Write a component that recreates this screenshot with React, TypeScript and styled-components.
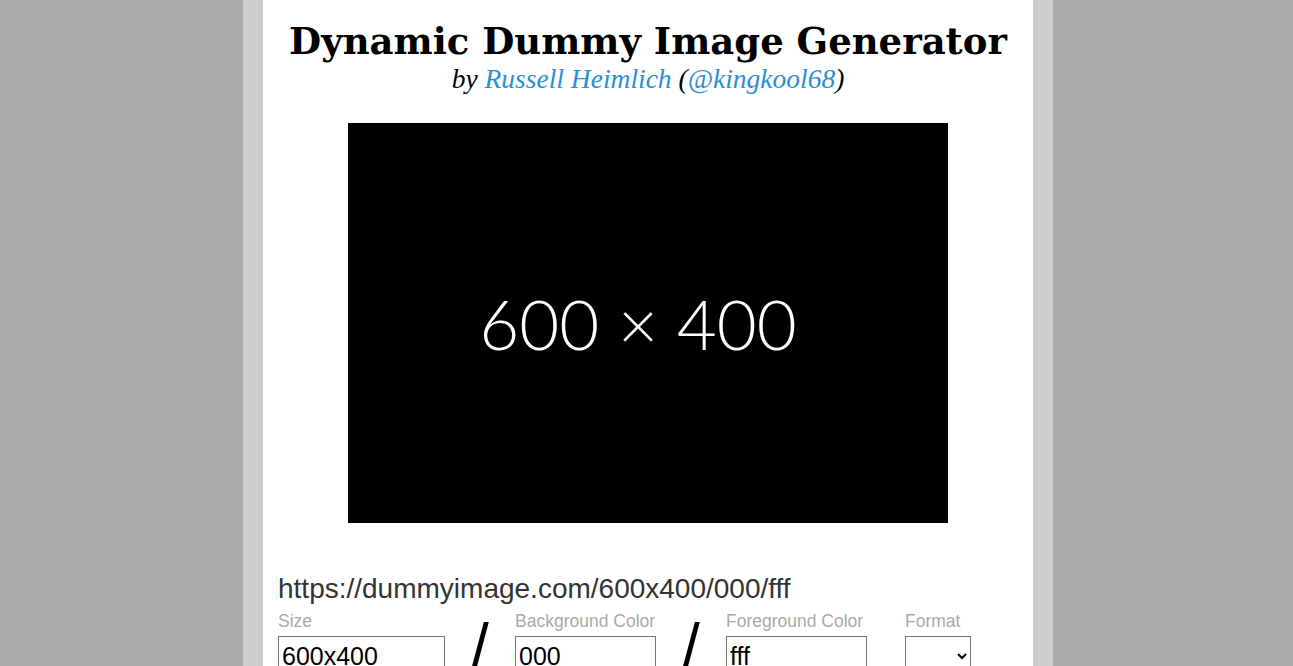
import React from "react";
import styled, { createGlobalStyle } from "styled-components";

const GlobalStyle = createGlobalStyle`
  html, body {
    margin: 0;
    padding: 0;
    background: #aaa;
    overflow: hidden;
  }
  body {
    padding-left: 3px;
    font-family: "Liberation Sans", Arial, sans-serif;
  }
`;

const Page = styled.div`
  width: 740px;
  min-height: 666px;
  margin: 0 auto;
  padding: 0 15px;
  background: #fff;
  border-left: 20px solid #ccc;
  border-right: 20px solid #ccc;
`;

const Header = styled.header`
  text-align: center;
  padding-top: 18px;
`;

const Title = styled.h1`
  margin: 0;
  font-family: "DejaVu Serif", Georgia, serif;
  font-weight: bold;
  font-size: 37px;
  line-height: 46px;
  color: #000;
`;

const Byline = styled.p`
  margin: 0;
  font-family: "Liberation Serif", Georgia, serif;
  font-style: italic;
  font-size: 27.5px;
  line-height: 30px;
  color: #000;

  a {
    color: #2b8fd3;
    text-decoration: none;
  }
`;

const Preview = styled.div<{ bg: string; fg: string }>`
  width: 600px;
  height: 400px;
  margin: 29px auto 0;
  padding-right: 20px;
  box-sizing: border-box;
  background: #${(p) => p.bg};
  color: #${(p) => p.fg};
  display: flex;
  align-items: center;
  justify-content: center;
  font-family: Lato, "Open Sans", sans-serif;
  font-weight: 300;
  font-size: 69px;
`;

const Url = styled.div`
  margin-top: 50px;
  font-size: 28px;
  line-height: 32px;
  color: #333;
`;

const Fields = styled.div`
  display: flex;
  align-items: flex-start;
  margin-top: 6px;
`;

const Field = styled.label<{ w: number }>`
  display: flex;
  flex-direction: column;
  width: ${(p) => p.w}px;
  font-size: 17.5px;
  line-height: 20px;
  color: #aaa;
`;

const TextInput = styled.input`
  margin-top: 5px;
  height: 40px;
  box-sizing: border-box;
  border: 1px solid #767676;
  padding: 0 3px;
  font-family: "Liberation Sans", Arial, sans-serif;
  font-size: 25px;
  color: #000;
  outline: none;
`;

const Select = styled.select`
  margin-top: 5px;
  height: 40px;
  box-sizing: border-box;
  border: 1px solid #767676;
  background: #fff;
  font-size: 16px;
`;

const Slash = styled.div<{ w: number }>`
  width: ${(p) => p.w}px;
  text-align: center;
  font-size: 64px;
  line-height: 64px;
  padding-top: 4px;
  color: #000;
`;

export default function App() {
  const size = "600x400";
  const bg = "000";
  const fg = "fff";
  const [w, h] = size.split("x");

  return (
    <>
      <GlobalStyle />
      <Page>
        <Header>
          <Title>Dynamic Dummy Image Generator</Title>
          <Byline>
            by <a href="#">Russell Heimlich</a> (<a href="#">@kingkool68</a>)
          </Byline>
        </Header>
        <Preview bg={bg} fg={fg}>
          {w} × {h}
        </Preview>
        <Url>https://dummyimage.com/{size}/{bg}/{fg}</Url>
        <Fields>
          <Field w={167}>
            Size
            <TextInput defaultValue={size} />
          </Field>
          <Slash w={70}>/</Slash>
          <Field w={141}>
            Background Color
            <TextInput defaultValue={bg} />
          </Field>
          <Slash w={70}>/</Slash>
          <Field w={141}>
            Foreground Color
            <TextInput defaultValue={fg} />
          </Field>
          <Slash w={38} />
          <Field w={66}>
            Format
            <Select defaultValue="">
              <option value=""></option>
              <option value="png">png</option>
              <option value="jpg">jpg</option>
              <option value="gif">gif</option>
            </Select>
          </Field>
        </Fields>
      </Page>
    </>
  );
}
